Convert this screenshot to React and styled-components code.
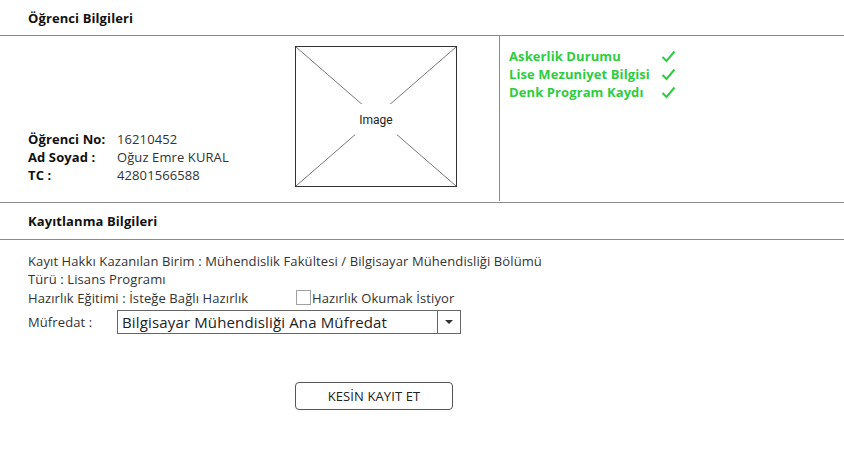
import React from "react";
import styled, { createGlobalStyle } from "styled-components";

const Global = createGlobalStyle`
  html, body { margin: 0; padding: 0; background: #fff; }
  body { font-family: "Open Sans", "Noto Sans", sans-serif; color: #222; }
  * { box-sizing: border-box; }
`;

const Page = styled.div`
  width: 844px;
  height: 461px;
  background: #fff;
  font-size: 13px;
  letter-spacing: 0.1px;
`;

const SectionHeader = styled.div`
  height: ${(p) => p.$h || 36}px;
  padding-left: 28px;
  display: flex;
  align-items: center;
  font-weight: 700;
  font-size: 13px;
  color: #111;
  border-bottom: 1px solid #8a8a8a;
  border-top: ${(p) => (p.$top ? "1px solid #8a8a8a" : "none")};
  margin-top: ${(p) => p.$mt || 0}px;
`;

const StudentRow = styled.div`
  display: flex;
  height: 165px;
`;

const LeftCol = styled.div`
  width: 500px;
  border-right: 1px solid #8a8a8a;
  display: grid;
  grid-template-columns: 295px 162px;
`;

const InfoBlock = styled.div`
  align-self: end;
  padding: 0 0 17px 28px;
  display: grid;
  grid-template-columns: 89px 1fr;
  grid-auto-rows: 18px;
  align-items: center;
`;

const InfoLabel = styled.span`
  font-weight: 700;
  color: #111;
`;

const InfoValue = styled.span`
  color: #333;
`;

const ImageBox = styled.div`
  margin-top: 10px;
  width: 162px;
  height: 141px;
  border: 1px solid #333;
  position: relative;
  display: flex;
  align-items: center;
  justify-content: center;
`;

const ImageLines = styled.svg`
  position: absolute;
  inset: 0;
  width: 100%;
  height: 100%;
`;

const ImageText = styled.span`
  position: relative;
  top: 3px;
  font-family: "Roboto", "Liberation Sans", sans-serif;
  font-size: 12px;
  letter-spacing: 0;
  color: #222;
  background: #fff;
  padding: 9px 4px;
`;

const RightCol = styled.div`
  padding: 11px 0 0 9px;
  display: grid;
  grid-template-columns: 152px 20px;
  grid-auto-rows: 18px;
  align-content: start;
  align-items: center;
`;

const Green = styled.span`
  color: #2ecc40;
  font-weight: 700;
  font-size: 13px;
`;

const Check = styled.svg`
  width: 15px;
  height: 13px;
`;

const Body = styled.div`
  padding: 12px 0 0 28px;
  color: #333;
`;

const Line = styled.div`
  height: ${(p) => p.$h || 18}px;
  display: flex;
  align-items: center;
`;

const PrepText = styled.span`
  width: 268px;
`;

const CheckBox = styled.span`
  width: 15px;
  height: 15px;
  border: 1px solid #a0a0a0;
  background: #fff;
  margin-right: 1px;
`;

const SelectRow = styled.div`
  margin-top: 3px;
  display: flex;
  align-items: center;
  height: 24px;
`;

const SelectLabel = styled.span`
  width: 89px;
`;

const Select = styled.div`
  width: 344px;
  height: 24px;
  border: 1px solid #666;
  display: flex;
  align-items: stretch;
  background: #fff;
`;

const SelectValue = styled.span`
  flex: 1;
  display: flex;
  align-items: center;
  padding-left: 4px;
  font-size: 15px;
  letter-spacing: 0.15px;
  color: #222;
`;

const SelectArrow = styled.span`
  width: 23px;
  border-left: 1px solid #666;
  display: flex;
  align-items: center;
  justify-content: center;
  &::after {
    content: "";
    border-left: 4px solid transparent;
    border-right: 4px solid transparent;
    border-top: 4px solid #333;
  }
`;

const ButtonRow = styled.div`
  margin-top: 48px;
  padding-left: 295px;
`;

const Button = styled.button`
  width: 158px;
  height: 28px;
  border: 1px solid #555;
  border-radius: 4px;
  background: #fff;
  font-family: "Open Sans", "Noto Sans", sans-serif;
  font-size: 13px;
  letter-spacing: 0.1px;
  color: #222;
  padding: 0;
`;

const Tick = () => (
  <Check viewBox="0 0 15 13">
    <path d="M1.5 7 L5.5 11 L13.5 1.5" fill="none" stroke="#2ecc40" strokeWidth="2" />
  </Check>
);

export default function App() {
  return (
    <Page>
      <Global />
      <SectionHeader $h={36}>Öğrenci Bilgileri</SectionHeader>
      <StudentRow>
        <LeftCol>
          <InfoBlock>
            <InfoLabel>Öğrenci No:</InfoLabel>
            <InfoValue>16210452</InfoValue>
            <InfoLabel>Ad Soyad :</InfoLabel>
            <InfoValue>Oğuz Emre KURAL</InfoValue>
            <InfoLabel>TC :</InfoLabel>
            <InfoValue>42801566588</InfoValue>
          </InfoBlock>
          <ImageBox>
            <ImageLines viewBox="0 0 160 139" preserveAspectRatio="none">
              <line x1="0" y1="0" x2="160" y2="139" stroke="#777" strokeWidth="1" />
              <line x1="160" y1="0" x2="0" y2="139" stroke="#777" strokeWidth="1" />
            </ImageLines>
            <ImageText>Image</ImageText>
          </ImageBox>
        </LeftCol>
        <RightCol>
          <Green>Askerlik Durumu</Green>
          <Tick />
          <Green>Lise Mezuniyet Bilgisi</Green>
          <Tick />
          <Green>Denk Program Kaydı</Green>
          <Tick />
        </RightCol>
      </StudentRow>
      <SectionHeader $top $mt={1} $h={38}>Kayıtlanma Bilgileri</SectionHeader>
      <Body>
        <Line>Kayıt Hakkı Kazanılan Birim : Mühendislik Fakültesi / Bilgisayar Mühendisliği Bölümü</Line>
        <Line>Türü : Lisans Programı</Line>
        <Line $h={19}>
          <PrepText>Hazırlık Eğitimi : İsteğe Bağlı Hazırlık</PrepText>
          <CheckBox />
          Hazırlık Okumak İstiyor
        </Line>
        <SelectRow>
          <SelectLabel>Müfredat :</SelectLabel>
          <Select>
            <SelectValue>Bilgisayar Mühendisliği Ana Müfredat</SelectValue>
            <SelectArrow />
          </Select>
        </SelectRow>
      </Body>
      <ButtonRow>
        <Button>KESİN KAYIT ET</Button>
      </ButtonRow>
    </Page>
  );
}
